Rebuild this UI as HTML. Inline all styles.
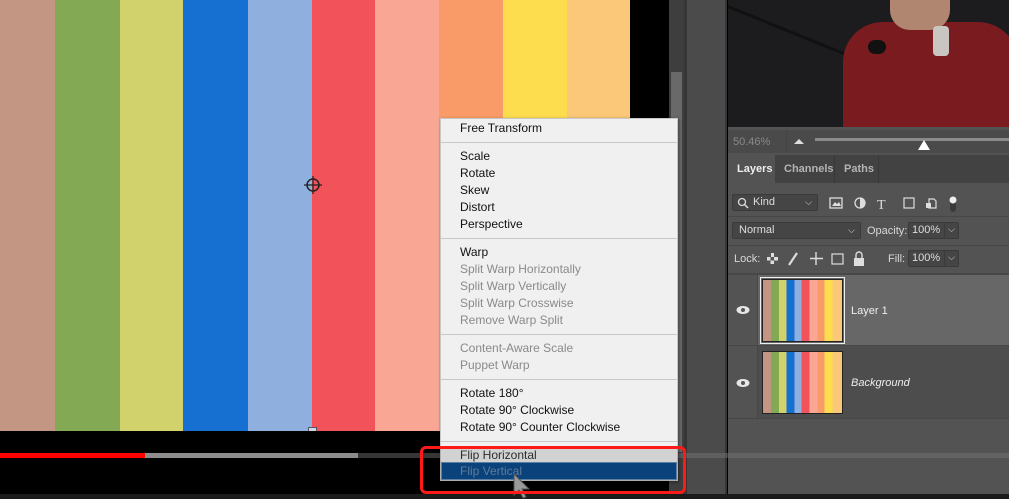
<!DOCTYPE html>
<html><head><meta charset="utf-8"><style>
*{margin:0;padding:0;box-sizing:border-box}
body{width:1009px;height:499px;overflow:hidden;background:#000;position:relative;font-family:"Liberation Sans",sans-serif}
.a{position:absolute}
.st{position:absolute;top:0;height:431px}
.mi{position:absolute;left:19px;font-size:12px;color:#111;line-height:14px}
.dis{color:#8a8a8a}
.sep{position:absolute;left:0;width:100%;height:1px;background:#c8c8c8}
.pt{color:#d8d8d8;font-size:11px}
.box{position:absolute;background:#454545;border:1px solid #3a3a3a;border-radius:2px;color:#ddd;font-size:11px;padding-left:6px;line-height:15px}
</style></head><body>
<div class="st" style="left:0;width:55px;background:#c29683"></div>
<div class="st" style="left:55px;width:65px;background:#84a955"></div>
<div class="st" style="left:120px;width:63px;background:#d2d26c"></div>
<div class="st" style="left:183px;width:65px;background:#1670d2"></div>
<div class="st" style="left:248px;width:64px;background:#8fb0de"></div>
<div class="st" style="left:312px;width:63px;background:#f2525a"></div>
<div class="st" style="left:375px;width:64px;background:#f9a794"></div>
<div class="st" style="left:439px;width:64px;background:#f99b68"></div>
<div class="st" style="left:503px;width:64px;background:#fddc4e"></div>
<div class="st" style="left:567px;width:63px;background:#fbc778"></div>
<div class="a" style="left:308px;top:427px;width:9px;height:9px;background:#cfd6e4;border:1px solid #556"></div>
<svg class="a" style="left:302px;top:174px" width="22" height="22"><circle cx="11" cy="11" r="6" fill="none" stroke="#222" stroke-width="1.5"/><path d="M11 2v18M2 11h18" stroke="#222" stroke-width="1.2"/></svg>
<div class="a" style="left:669px;top:0;width:15px;height:499px;background:#3e3e3e"></div>
<div class="a" style="left:671px;top:72px;width:11px;height:380px;background:#696969"></div>
<div class="a" style="left:684px;top:0;width:43px;height:499px;background:#4b4b4b;border-left:3px solid #363636;border-right:2px solid #363636"></div>
<div class="a" style="left:728px;top:0;width:281px;height:127px;background:#1c1c1e;overflow:hidden">
 <div class="a" style="left:0;top:5px;width:200px;height:3px;background:#111;transform:rotate(22deg);transform-origin:0 0"></div>
 <div class="a" style="left:115px;top:22px;width:175px;height:120px;background:#7a1b1f;border-radius:40px 40px 0 0"></div>
 <div class="a" style="left:162px;top:0;width:60px;height:30px;background:#b08670;border-radius:0 0 20px 20px"></div>
 <div class="a" style="left:205px;top:26px;width:16px;height:30px;background:#c9c6c2;border-radius:4px"></div>
 <div class="a" style="left:140px;top:40px;width:18px;height:14px;background:#111;border-radius:8px"></div>
</div>
<div class="a" style="left:728px;top:127px;width:281px;height:372px;background:#535353"></div>
<div class="a" style="left:728px;top:130px;width:281px;height:23px;background:#4a4a4a"></div>
<div class="a pt" style="left:733px;top:136px;color:#8a8a8a">50.46%</div>
<div class="a" style="left:786px;top:130px;width:1px;height:23px;background:#444"></div>
<svg class="a" style="left:793px;top:138px" width="12" height="8"><path d="M1 6L6 1L11 6Z" fill="#ddd"/></svg>
<div class="a" style="left:815px;top:138px;width:194px;height:3px;background:#8a8a8a"></div>
<svg class="a" style="left:917px;top:139px" width="14" height="12"><path d="M1 11L7 1L13 11Z" fill="#fff"/></svg>
<div class="a" style="left:728px;top:155px;width:281px;height:28px;background:#424242"></div>
<div class="a" style="left:728px;top:155px;width:47px;height:29px;background:#535353"></div>
<div class="a" style="left:737px;top:163px;font-size:11px;color:#eee;font-weight:bold">Layers</div>
<div class="a" style="left:784px;top:163px;font-size:11px;color:#b4b4b4;font-weight:bold">Channels</div>
<div class="a" style="left:834px;top:155px;width:1px;height:28px;background:#383838"></div>
<div class="a" style="left:844px;top:163px;font-size:11px;color:#b4b4b4;font-weight:bold">Paths</div>
<div class="a" style="left:878px;top:155px;width:1px;height:28px;background:#383838"></div>
<div class="box" style="left:732px;top:194px;width:86px;height:17px;padding-left:20px">Kind<span style="position:absolute;right:5px;font-size:9px">⌵</span></div>
<svg class="a" style="left:737px;top:197px" width="12" height="12"><circle cx="5" cy="5" r="3.5" fill="none" stroke="#ddd" stroke-width="1.3"/><path d="M7.5 7.5L11 11" stroke="#ddd" stroke-width="1.5"/></svg>
<svg class="a" style="left:829px;top:196px" width="130" height="18"><rect x="1" y="2" width="12" height="10" fill="none" stroke="#ddd" stroke-width="1.3"/><path d="M3 10l3-4 2 2 2-2 2 4z" fill="#ddd"/><circle cx="31" cy="7" r="5" fill="none" stroke="#ddd" stroke-width="1.3"/><path d="M31 2a5 5 0 0 1 0 10z" fill="#ddd"/><text x="48" y="13" fill="#ddd" font-size="14" font-family="Liberation Serif">T</text><rect x="75" y="2" width="10" height="10" fill="none" stroke="#ddd" stroke-width="1.2"/><path d="M100 3h5l2 2v7h-7z" fill="none" stroke="#ddd" stroke-width="1.2"/><rect x="97" y="7" width="5" height="5" fill="#ddd"/><rect x="121" y="2" width="6" height="14" rx="3" fill="#3a3a3a"/><circle cx="124" cy="4" r="3.5" fill="#eee"/></svg>
<div class="a" style="left:728px;top:216px;width:281px;height:1px;background:#474747"></div>
<div class="box" style="left:732px;top:222px;width:129px;height:17px">Normal<span style="position:absolute;right:5px;font-size:9px">⌵</span></div>
<div class="a pt" style="left:867px;top:225px">Opacity:</div>
<div class="box" style="left:908px;top:222px;width:51px;height:17px;padding-left:3px">100%<span style="position:absolute;right:0;top:-1px;width:14px;height:17px;border-left:1px solid #3a3a3a;text-align:center;font-size:9px">⌵</span></div>
<div class="a" style="left:728px;top:245px;width:281px;height:1px;background:#474747"></div>
<div class="a pt" style="left:734px;top:253px">Lock:</div>
<svg class="a" style="left:766px;top:251px" width="104" height="16"><rect x="1" y="2" width="11" height="11" fill="#ddd"/><path d="M1 2h4v4h-4zM8 2h4v4h-4zM4.5 6h3.5v3.5h-3.5zM1 9.5h3.5v3.5h-3.5zM8 9.5h4v3.5h-4z" fill="#555"/><path d="M23 14l8-12" stroke="#ddd" stroke-width="2.2"/><path d="M50 1v13M44 7.5h13" stroke="#ddd" stroke-width="1.4"/><rect x="66" y="3" width="11" height="10" fill="none" stroke="#ddd" stroke-width="1.2"/><rect x="88" y="7" width="10" height="8" fill="#ddd"/><path d="M90 7V4a3 3 0 0 1 6 0v3" fill="none" stroke="#ddd" stroke-width="1.4"/></svg>
<div class="a pt" style="left:888px;top:253px">Fill:</div>
<div class="box" style="left:908px;top:250px;width:51px;height:17px;padding-left:3px">100%<span style="position:absolute;right:0;top:-1px;width:14px;height:17px;border-left:1px solid #3a3a3a;text-align:center;font-size:9px">⌵</span></div>
<div class="a" style="left:728px;top:273px;width:281px;height:2px;background:#474747"></div>
<div class="a" style="left:758px;top:275px;width:251px;height:70px;background:#676767"></div>
<div class="a" style="left:728px;top:275px;width:30px;height:145px;background:#535353;border-right:1px solid #474747"></div>
<div class="a" style="left:728px;top:345px;width:281px;height:1px;background:#474747"></div>
<div class="a" style="left:758px;top:346px;width:251px;height:72px;background:#4d4d4d"></div>
<div class="a" style="left:728px;top:418px;width:281px;height:1px;background:#474747"></div>
<svg class="a" style="left:736px;top:305px" width="14" height="10"><ellipse cx="7" cy="5" rx="6.5" ry="4" fill="#e6e6e6"/><circle cx="7" cy="5" r="2" fill="#555"/></svg>
<svg class="a" style="left:736px;top:378px" width="14" height="10"><ellipse cx="7" cy="5" rx="6.5" ry="4" fill="#e6e6e6"/><circle cx="7" cy="5" r="2" fill="#555"/></svg>
<div class="a" style="left:762px;top:279px;width:81px;height:63px;border:1px solid #222;background:linear-gradient(90deg,#c29683 0 10%,#84a955 10% 20%,#d2d26c 20% 30%,#1670d2 30% 40%,#8fb0de 40% 49%,#f2525a 49% 59%,#f9a794 59% 69%,#f99b68 69% 78%,#fddc4e 78% 88%,#fbc778 88%);outline:1px solid #eee;outline-offset:1px"></div>
<div class="a" style="left:762px;top:351px;width:81px;height:63px;border:1px solid #222;background:linear-gradient(90deg,#c29683 0 10%,#84a955 10% 20%,#d2d26c 20% 30%,#1670d2 30% 40%,#8fb0de 40% 49%,#f2525a 49% 59%,#f9a794 59% 69%,#f99b68 69% 78%,#fddc4e 78% 88%,#fbc778 88%)"></div>
<div class="a" style="left:851px;top:305px;font-size:11px;color:#eee">Layer 1</div>
<div class="a" style="left:851px;top:377px;font-size:11px;color:#eee;font-style:italic">Background</div>
<div class="a" style="left:0;top:431px;width:669px;height:68px;background:#000"></div>
<div class="a" style="left:0;top:453px;width:1009px;height:5px;background:rgba(120,120,120,.45)"></div>
<div class="a" style="left:145px;top:453px;width:213px;height:5px;background:#8c8c8c"></div>
<div class="a" style="left:0;top:453px;width:145px;height:5px;background:#f00"></div>
<div class="a" style="left:0;top:494px;width:1009px;height:5px;background:#1b1b1b"></div>
<div class="a" style="left:440px;top:118px;width:238px;height:363px;background:#f0f0f0;border:1px solid #c8c8c8;box-shadow:1px 1px 3px rgba(0,0,0,.4)">
 <div class="mi" style="top:2px">Free Transform</div>
 <div class="sep" style="top:23px"></div>
 <div class="mi" style="top:30px">Scale</div>
 <div class="mi" style="top:47px">Rotate</div>
 <div class="mi" style="top:64px">Skew</div>
 <div class="mi" style="top:81px">Distort</div>
 <div class="mi" style="top:98px">Perspective</div>
 <div class="sep" style="top:119px"></div>
 <div class="mi" style="top:126px">Warp</div>
 <div class="mi dis" style="top:143px">Split Warp Horizontally</div>
 <div class="mi dis" style="top:160px">Split Warp Vertically</div>
 <div class="mi dis" style="top:177px">Split Warp Crosswise</div>
 <div class="mi dis" style="top:194px">Remove Warp Split</div>
 <div class="sep" style="top:215px"></div>
 <div class="mi dis" style="top:222px">Content-Aware Scale</div>
 <div class="mi dis" style="top:239px">Puppet Warp</div>
 <div class="sep" style="top:260px"></div>
 <div class="mi" style="top:267px">Rotate 180°</div>
 <div class="mi" style="top:284px">Rotate 90° Clockwise</div>
 <div class="mi" style="top:301px">Rotate 90° Counter Clockwise</div>
 <div class="sep" style="top:322px"></div>
 <div class="mi" style="top:329px;color:#333">Flip Horizontal</div>
 <div class="a" style="left:0;top:343px;width:236px;height:18px;background:#0c4c8c;border:1px solid #6a8fb8"></div>
 <div class="mi" style="top:345px;color:#6f8cb0">Flip Vertical</div>
</div>
<div class="a" style="left:440px;top:446px;width:238px;height:35px;background:rgba(0,0,0,.12)"></div>
<svg class="a" style="left:512px;top:473px" width="22" height="26"><path d="M2 1L2 22L7 17L11 25L14 24L10 16L17 16Z" fill="#9a9a9a" stroke="#555" stroke-width="1"/></svg>
<div class="a" style="left:420px;top:446px;width:266px;height:48px;border:3px solid #ff1a1a;border-radius:6px"></div>
</body></html>
